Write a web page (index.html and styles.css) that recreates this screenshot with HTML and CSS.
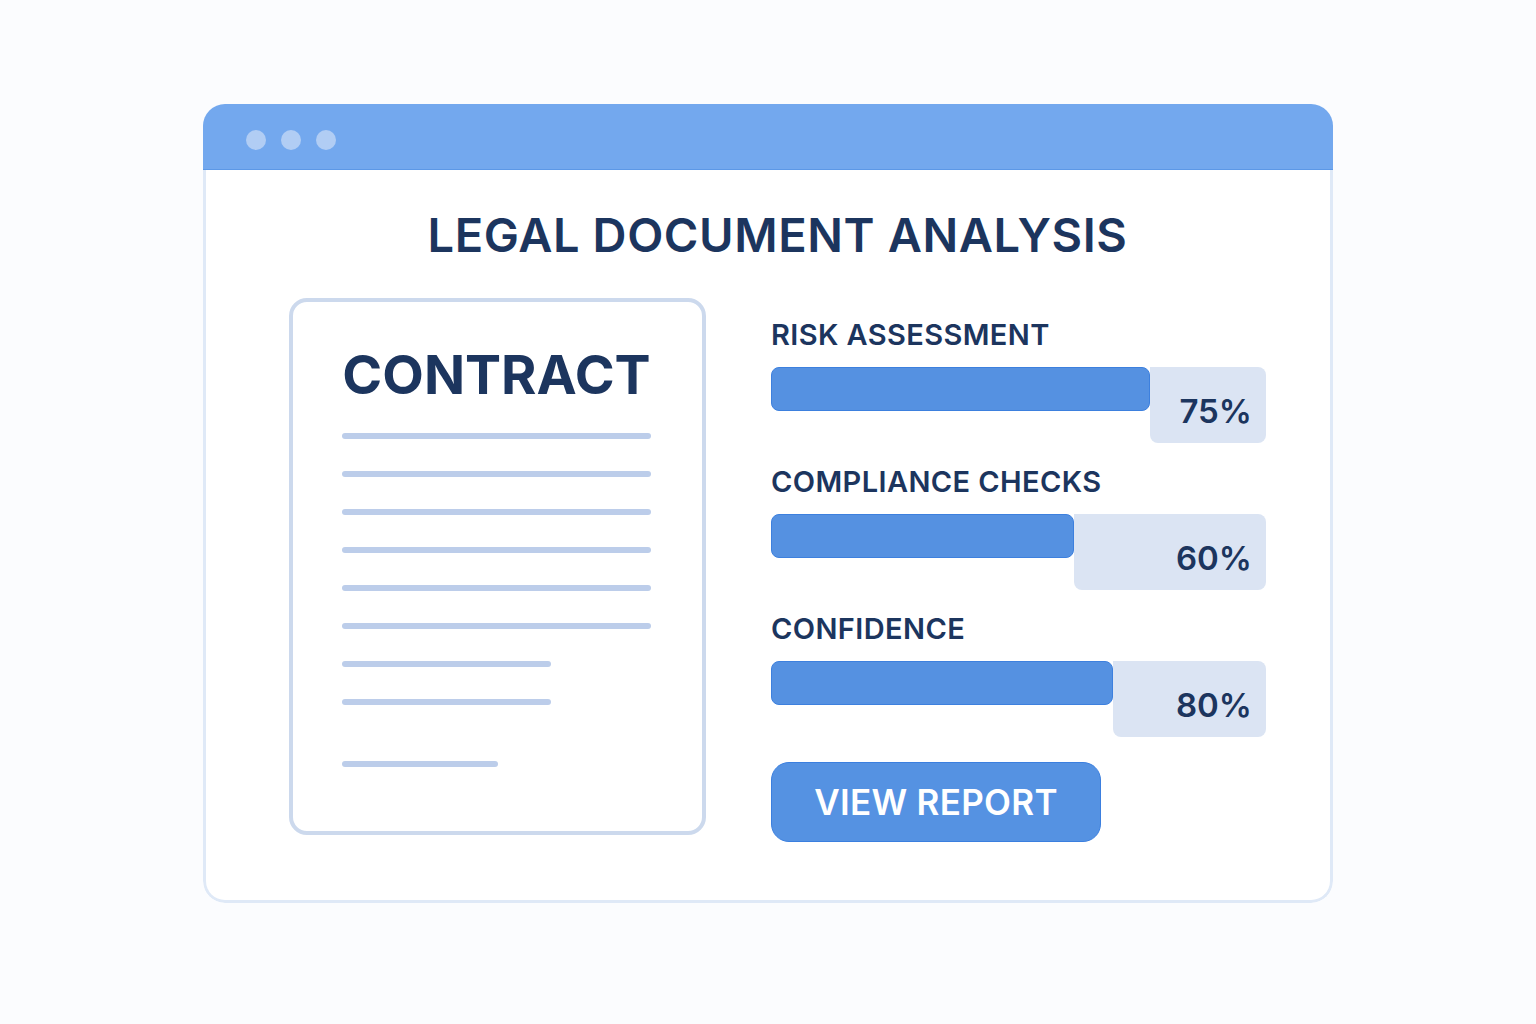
FILE: index.html
```html
<!DOCTYPE html>
<html lang="en">
<head>
<meta charset="utf-8">
<title>Legal Document Analysis</title>
<link rel="stylesheet" href="styles.css">
</head>
<body>
<div class="window">
  <div class="titlebar">
    <span class="dot"></span><span class="dot"></span><span class="dot"></span>
  </div>
  <div class="body">
    <h1 class="title">LEGAL DOCUMENT ANALYSIS</h1>
    <div class="content">
      <div class="doc">
        <div class="doc-title">CONTRACT</div>
        <div class="lines">
          <span class="line full"></span>
          <span class="line full"></span>
          <span class="line full"></span>
          <span class="line full"></span>
          <span class="line full"></span>
          <span class="line full"></span>
          <span class="line mid"></span>
          <span class="line mid"></span>
          <span class="line short"></span>
        </div>
      </div>
      <div class="metrics">
        <div class="metric">
          <div class="label">RISK ASSESSMENT</div>
          <div class="bar">
            <div class="fill" style="width:379px"></div>
            <div class="rest"><span class="pct">75%</span></div>
          </div>
        </div>
        <div class="metric">
          <div class="label">COMPLIANCE CHECKS</div>
          <div class="bar">
            <div class="fill" style="width:303px"></div>
            <div class="rest"><span class="pct">60%</span></div>
          </div>
        </div>
        <div class="metric">
          <div class="label">CONFIDENCE</div>
          <div class="bar">
            <div class="fill" style="width:342px"></div>
            <div class="rest"><span class="pct">80%</span></div>
          </div>
        </div>
        <button class="btn">VIEW REPORT</button>
      </div>
    </div>
  </div>
</div>
</body>
</html>
```

FILE: styles.css
```css
* { box-sizing: border-box; }
html, body { margin: 0; padding: 0; }
body {
  background: #fbfcfe;
  font-family: Inter, "Noto Sans", "Liberation Sans", sans-serif;
  color: #1c355e;
  padding-top: 104px;
}
.window {
  width: 1130px;
  margin: 0 auto;
  border-radius: 22px;
  overflow: hidden;
  background: #ffffff;
}
.titlebar {
  height: 66px;
  background: #73a8ee;
  border-bottom: 1px solid #5c98e7;
  display: flex;
  align-items: center;
  gap: 15px;
  padding: 6px 0 0 43px;
}
.dot {
  width: 20px;
  height: 20px;
  border-radius: 50%;
  background: #b1cdf4;
}
.body {
  border: 3px solid #dfe9f7;
  border-top: none;
  border-radius: 0 0 22px 22px;
  padding: 36px 64px 58px 83px;
}
.title {
  margin: 0 0 34px;
  font-size: 47px;
  line-height: 58px;
  font-weight: 600;
  letter-spacing: 0.6px;
  text-align: center;
  color: #1c355e;
}
.content {
  display: flex;
  align-items: flex-start;
  gap: 65px;
}
.doc {
  width: 417px;
  height: 537px;
  border: 4px solid #ccd9ed;
  border-radius: 18px;
  padding: 41px 51px 0 49px;
}
.doc-title {
  font-size: 54px;
  font-weight: 700;
  line-height: 64px;
  text-align: center;
  color: #1c355e;
}
.lines {
  margin-top: 26px;
  display: flex;
  flex-direction: column;
  gap: 32px;
}
.line {
  display: block;
  height: 6px;
  border-radius: 3px;
  background: #bccdea;
}
.line.full { width: 309px; }
.line.mid { width: 209px; }
.line.short { width: 156px; margin-top: 24px; }
.metrics {
  width: 495px;
  margin-top: 20px;
  display: flex;
  flex-direction: column;
  gap: 22px;
}
.label {
  font-size: 29px;
  line-height: 34px;
  font-weight: 600;
  letter-spacing: 0.4px;
  color: #1c355e;
  margin-bottom: 15px;
}
.bar {
  display: flex;
  align-items: flex-start;
}
.fill {
  height: 44px;
  background: #5591e1;
  border: 1px solid #3d80de;
  border-radius: 8px;
  flex: none;
}
.rest {
  flex: 1;
  height: 76px;
  background: #dbe4f3;
  border-radius: 0 8px 8px 8px;
  display: flex;
  align-items: flex-end;
  justify-content: flex-end;
  padding: 0 14px 15px 0;
}
.pct {
  font-size: 33px;
  line-height: 34px;
  font-weight: 600;
  color: #1c355e;
}
.btn {
  margin-top: 3px;
  width: 330px;
  height: 80px;
  background: #5592e2;
  border: 1px solid #3b7fdf;
  border-radius: 18px;
  color: #ffffff;
  font-family: Inter, "Noto Sans", "Liberation Sans", sans-serif;
  font-size: 35px;
  font-weight: 600;
  letter-spacing: 0.3px;
  padding: 0;
  cursor: pointer;
}
```
